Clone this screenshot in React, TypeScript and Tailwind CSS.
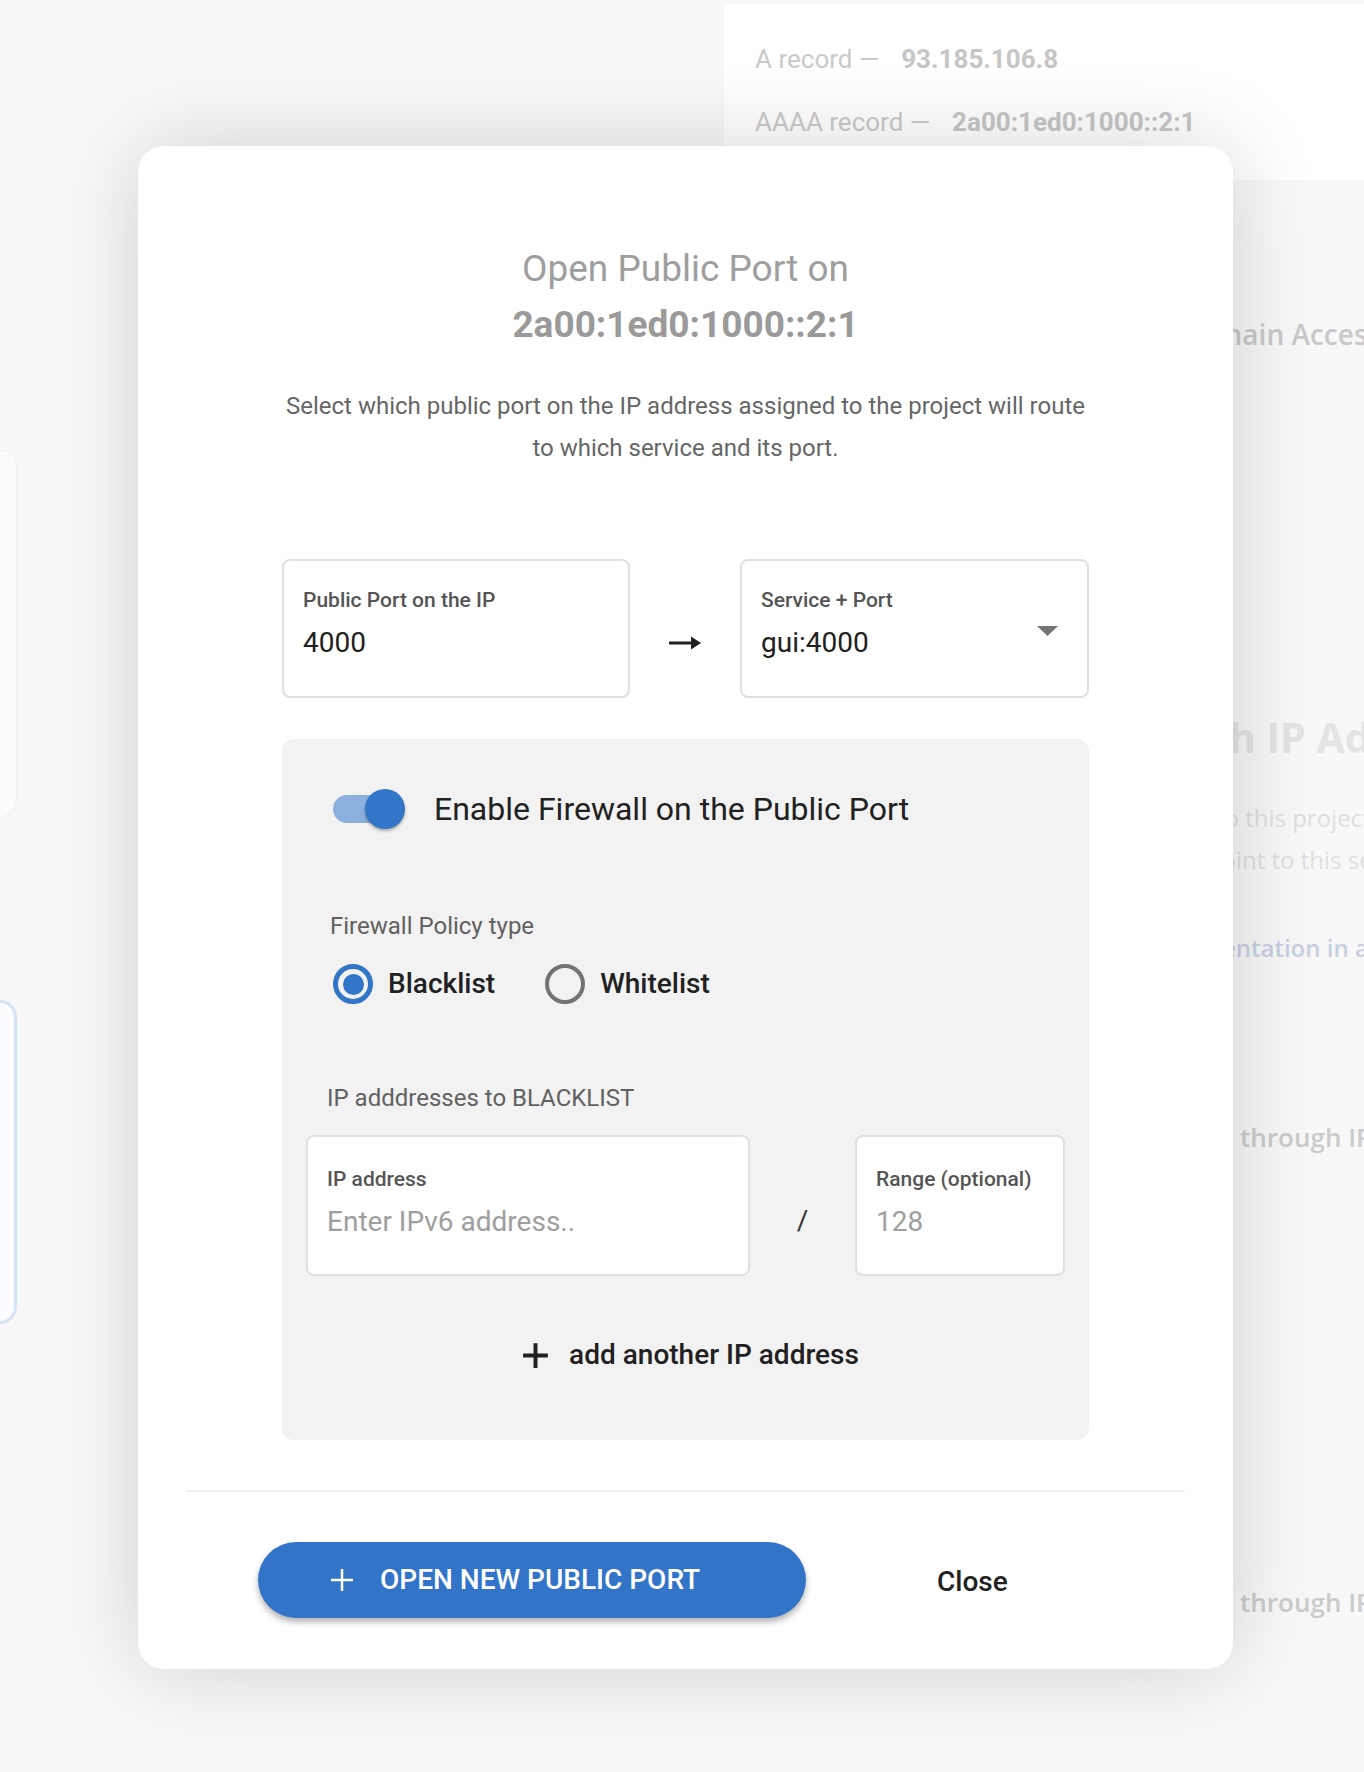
import React from "react";

function PlusIcon({ size, stroke, color }: { size: number; stroke: number; color: string }) {
  return (
    <svg width={size} height={size} viewBox="0 0 24 24" fill="none">
      <path d="M12 1v22M1 12h22" stroke={color} strokeWidth={stroke} />
    </svg>
  );
}

function LongArrow() {
  return (
    <svg width="32" height="14" viewBox="0 0 32 14" className="mt-[77px]">
      <rect x="0" y="5.5" width="24" height="3" fill="#212121" />
      <path d="M22 0.5 L32 7 L22 13.5 Z" fill="#212121" />
    </svg>
  );
}

function Field({
  label,
  value,
  muted,
  className,
  dropdown,
}: {
  label: string;
  value: string;
  muted?: boolean;
  className?: string;
  dropdown?: boolean;
}) {
  return (
    <div
      className={
        "flex justify-between rounded-[8px] border-2 border-[#e0e0e0] bg-white pl-[19px] pr-[29px] " +
        (className || "")
      }
    >
      <div className="flex flex-col">
        <span className="text-[21px] font-medium leading-[24px] text-[#555555]">{label}</span>
        <span
          className={
            "mt-[13px] text-[28px] leading-[36px] " + (muted ? "text-[#9e9e9e]" : "text-[#212121]")
          }
        >
          {value}
        </span>
      </div>
      {dropdown && (
        <svg width="21" height="10" viewBox="0 0 21 10" className="mt-[38px]">
          <path d="M0 0 L21 0 L10.5 10 Z" fill="#757575" />
        </svg>
      )}
    </div>
  );
}

function Radio({ checked, label }: { checked?: boolean; label: string }) {
  return (
    <div className="flex items-center gap-[15px]">
      {checked ? (
        <div className="flex h-10 w-10 items-center justify-center rounded-full border-[5px] border-[#3176c8]">
          <div className="h-[21px] w-[21px] rounded-full bg-[#3176c8]" />
        </div>
      ) : (
        <div className="h-10 w-10 rounded-full border-[4px] border-[#737373]" />
      )}
      <span className="text-[28px] font-medium text-[#212121]">{label}</span>
    </div>
  );
}

function Background() {
  return (
    <div className="flex h-full font-['Open_Sans',sans-serif]">
      <div className="flex w-[17px] shrink-0 flex-col pt-[450px]">
        <div className="h-[367px] rounded-r-[18px] border-y border-r border-[#f1f1f1] bg-[#fbfbfb]" />
        <div className="mt-[183px] h-[324px] rounded-r-[20px] border-y-[3px] border-r-[3px] border-[#d5e2f3] bg-[#fbfcfd]" />
      </div>
      <div className="w-[707px] shrink-0" />
      <div className="w-[700px] shrink-0 pt-[4px]">
        <div className="flex h-[176px] flex-col bg-white pl-[31px] pt-[37px] font-['Roboto',sans-serif]">
          <div className="flex h-[36px] items-center">
            <span className="text-[26px] text-[#cacaca]">A record —</span>
            <span className="ml-[22px] text-[26px] font-bold text-[#c6c6c6]">93.185.106.8</span>
          </div>
          <div className="mt-[27px] flex h-[36px] items-center">
            <span className="text-[26px] text-[#cacaca]">AAAA record —</span>
            <span className="ml-[22px] text-[26px] font-bold text-[#c6c6c6]">2a00:1ed0:1000::2:1</span>
          </div>
        </div>
        <div className="ml-[454px] mt-[136px] whitespace-nowrap text-[28px] font-semibold leading-[36px] text-[#c9c9c9]">
          Domain Access
        </div>
        <div className="ml-[220px] mt-[358px] whitespace-nowrap text-[41px] font-bold leading-[54px] text-[#e4e4e4]">
          Access through IP Address
        </div>
        <div className="ml-[275px] mt-[33px] whitespace-nowrap text-[24px] leading-[42px] text-[#dfdfdf]">
          Public IPs assigned to this project
        </div>
        <div className="ml-[437px] whitespace-nowrap text-[24px] leading-[42px] text-[#dfdfdf]">
          can point to this service
        </div>
        <div className="ml-[354px] mt-[47px] whitespace-nowrap text-[24px] font-semibold leading-[40px] text-[#c7d0e2]">
          Read documentation in a new tab
        </div>
        <div className="ml-[426px] mt-[151px] whitespace-nowrap text-[26px] font-semibold leading-[36px] text-[#cbcbcb]">
          Access through IP
        </div>
        <div className="ml-[426px] mt-[429px] whitespace-nowrap text-[26px] font-semibold leading-[36px] text-[#cbcbcb]">
          Access through IP
        </div>
      </div>
    </div>
  );
}

export default function App() {
  return (
    <div className="relative h-[1772px] w-full overflow-hidden bg-[#f8f8f8]">
      <Background />

      <div className="absolute left-[138px] top-[146px] flex w-[1095px] flex-col rounded-[26px] bg-white px-[48px] pb-[51px] pt-[95px] font-['Roboto',sans-serif] shadow-[0_0_90px_rgba(0,0,0,0.16)]">
        <div className="flex flex-col items-center">
          <h1 className="text-[37px] font-normal leading-[56px] text-[#9e9e9e]">Open Public Port on</h1>
          <div className="text-[37px] font-bold leading-[56px] text-[#9a9a9a]">2a00:1ed0:1000::2:1</div>
          <p className="mt-[32px] text-center text-[24px] leading-[42px] text-[#666666]">
            Select which public port on the IP address assigned to the project will route
            <br />
            to which service and its port.
          </p>
        </div>

        <div className="mx-[96px] mt-[90px] flex flex-col">
          <div className="flex items-start justify-between">
            <Field label="Public Port on the IP" value="4000" className="h-[139px] w-[348px] pt-[27px]" />
            <LongArrow />
            <Field
              label="Service + Port"
              value="gui:4000"
              className="h-[139px] w-[349px] pt-[27px]"
              dropdown
            />
          </div>

          <div className="mt-[41px] flex flex-col rounded-[12px] bg-[#f2f2f2] px-[24px] pb-[67px] pt-[50px]">
            <div className="flex items-center pl-[27px]">
              <div className="relative h-10 w-[72px]">
                <div className="absolute left-0 top-[6px] h-[28px] w-[62px] rounded-full bg-[#8cb0de]" />
                <div className="absolute right-0 top-0 h-10 w-10 rounded-full bg-[#3176c8] shadow-[0_2px_3px_rgba(0,0,0,0.3)]" />
              </div>
              <span className="ml-[29px] text-[32px] leading-[40px] text-[#212121]">
                Enable Firewall on the Public Port
              </span>
            </div>

            <div className="mt-[81px] pl-[24px] text-[24px] leading-[32px] text-[#616161]">Firewall Policy type</div>
            <div className="mt-[21px] flex items-center gap-[50px] pl-[27px]">
              <Radio checked label="Blacklist" />
              <Radio label="Whitelist" />
            </div>

            <div className="mt-[77px] pl-[21px] text-[24px] leading-[32px] text-[#616161]">
              IP adddresses to BLACKLIST
            </div>
            <div className="mt-[21px] flex items-start justify-between">
              <Field
                label="IP address"
                value="Enter IPv6 address.."
                muted
                className="h-[141px] w-[444px] pt-[30px]"
              />
              <span className="mt-[68px] text-[28px] leading-[36px] text-[#333333]">/</span>
              <Field label="Range (optional)" value="128" muted className="h-[141px] w-[210px] pt-[30px]" />
            </div>

            <button className="mt-[61px] flex items-center justify-center gap-[20px] self-center pl-[10px]">
              <PlusIcon size={27} stroke={3.5} color="#212121" />
              <span className="text-[28px] font-medium leading-[36px] text-[#212121]">add another IP address</span>
            </button>
          </div>
        </div>

        <div className="mt-[50px] h-[2px] bg-[#f0f0f0]" />

        <div className="mt-[50px] flex items-center pl-[72px]">
          <button className="flex h-[76px] w-[548px] items-center rounded-full bg-[#3275c8] pl-[72px] shadow-[0_4px_6px_rgba(0,0,0,0.3)]">
            <PlusIcon size={24} stroke={2.5} color="#ffffff" />
            <span className="ml-[26px] text-[28px] font-medium text-white">OPEN NEW PUBLIC PORT</span>
          </button>
          <button className="ml-[131px] mt-[4px] text-[28px] font-medium text-[#212121]">Close</button>
        </div>
      </div>
    </div>
  );
}
